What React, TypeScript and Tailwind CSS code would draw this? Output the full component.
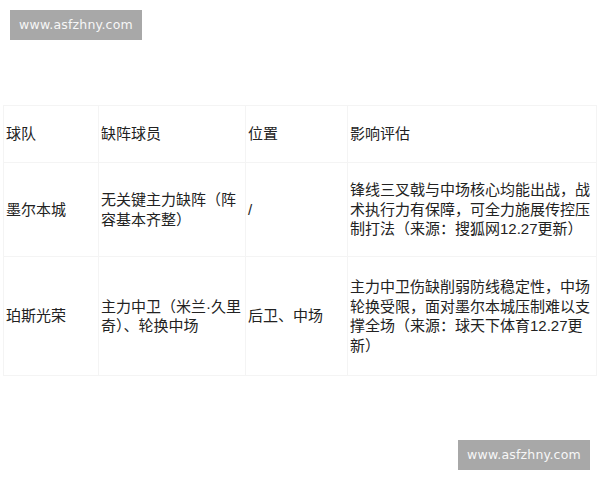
const rows = [
  {
    team: '墨尔本城',
    players: '无关键主力缺阵（阵容基本齐整）',
    position: '/',
    impact: '锋线三叉戟与中场核心均能出战，战术执行力有保障，可全力施展传控压制打法（来源：搜狐网12.27更新）',
    height: 'h-[94px]',
  },
  {
    team: '珀斯光荣',
    players: '主力中卫（米兰·久里奇）、轮换中场',
    position: '后卫、中场',
    impact: '主力中卫伤缺削弱防线稳定性，中场轮换受限，面对墨尔本城压制难以支撑全场（来源：球天下体育12.27更新）',
    height: 'h-[119px]',
  },
];

function Watermark({ className }: { className: string }) {
  return (
    <div
      className={`absolute flex h-[30px] w-[132px] items-center justify-center bg-[#a8a8a8] text-[12.5px] tracking-[0.2px] text-[#f7f7f7] ${className}`}
      style={{ fontFamily: '"DejaVu Sans", sans-serif' }}
    >
      www.asfzhny.com
    </div>
  );
}

export default function App() {
  const cell = 'border border-[#f4f4f4] pl-[2px] pr-0 align-middle text-left font-normal';

  return (
    <div
      className="relative h-[480px] w-[600px] overflow-hidden bg-white text-[15px] leading-[19.5px] text-[#222]"
      style={{ fontFamily: '"Liberation Sans", "Noto Sans CJK SC", sans-serif' }}
    >
      <Watermark className="left-[10px] top-[10px]" />

      <div className="pl-[3px] pt-[105px]">
        <table className="w-[593px] table-fixed border-collapse">
          <colgroup>
            <col className="w-[95px]" />
            <col className="w-[147px]" />
            <col className="w-[102px]" />
            <col className="w-[249px]" />
          </colgroup>
          <thead>
            <tr className="h-[57px]">
              <th className={cell}>球队</th>
              <th className={cell}>缺阵球员</th>
              <th className={cell}>位置</th>
              <th className={cell}>影响评估</th>
            </tr>
          </thead>
          <tbody>
            {rows.map(row => (
              <tr key={row.team} className={row.height}>
                <td className={cell}>{row.team}</td>
                <td className={cell}>{row.players}</td>
                <td className={cell}>{row.position}</td>
                <td className={cell}>{row.impact}</td>
              </tr>
            ))}
          </tbody>
        </table>
      </div>

      <Watermark className="left-[458px] top-[440px]" />
    </div>
  );
}
